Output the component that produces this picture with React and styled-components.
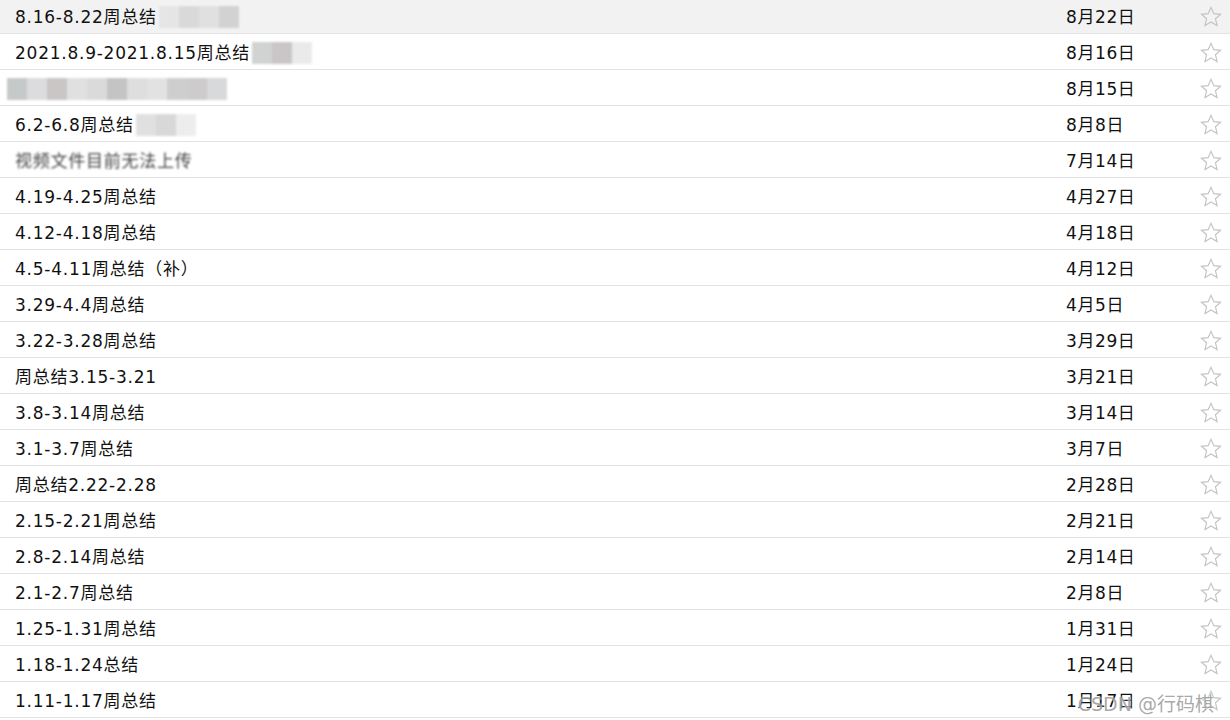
import styled, { createGlobalStyle } from "styled-components";

const GlobalStyle = createGlobalStyle`
  html, body {
    margin: 0;
    padding: 0;
    background: #fff;
    overflow: hidden;
  }
`;

const rows = [
  { title: "8.16-8.22周总结", date: "8月22日", blur: "tail", active: true },
  { title: "2021.8.9-2021.8.15周总结", date: "8月16日", blur: "tail2" },
  { title: "", date: "8月15日", blur: "full" },
  { title: "6.2-6.8周总结", date: "8月8日", blur: "tail3" },
  { title: "视频文件目前无法上传", date: "7月14日", blur: "smear" },
  { title: "4.19-4.25周总结", date: "4月27日" },
  { title: "4.12-4.18周总结", date: "4月18日" },
  { title: "4.5-4.11周总结（补）", date: "4月12日" },
  { title: "3.29-4.4周总结", date: "4月5日" },
  { title: "3.22-3.28周总结", date: "3月29日" },
  { title: "周总结3.15-3.21", date: "3月21日" },
  { title: "3.8-3.14周总结", date: "3月14日" },
  { title: "3.1-3.7周总结", date: "3月7日" },
  { title: "周总结2.22-2.28", date: "2月28日" },
  { title: "2.15-2.21周总结", date: "2月21日" },
  { title: "2.8-2.14周总结", date: "2月14日" },
  { title: "2.1-2.7周总结", date: "2月8日" },
  { title: "1.25-1.31周总结", date: "1月31日" },
  { title: "1.18-1.24总结", date: "1月24日" },
  { title: "1.11-1.17周总结", date: "1月17日" },
];

const mosaics = {
  tail: ["#e3e3e3", "#d4d4d4", "#dcdcdc", "#cbcbcb"],
  tail2: ["#c6c9c9", "#bdb9ba", "#e6e6e6"],
  tail3: ["#d9d9d9", "#cfcfcf", "#e9e9e9"],
  full: ["#b9bcbc", "#d4d4d6", "#bdb8b8", "#d9d9da", "#d2d2d2", "#b6b6b6", "#d6d6d6", "#dcdcdc", "#c3c3c3", "#c1bfbf", "#cfd0d1"],
};

const Star = () => (
  <svg width="22" height="21" viewBox="0 0 24 23">
    <path
      d="M12 1.5l3.1 6.9 7.4.7-5.6 4.9 1.7 7.3L12 17.5l-6.6 3.8 1.7-7.3-5.6-4.9 7.4-.7z"
      fill="none"
      stroke="#c4c4c4"
      strokeWidth="1.3"
      strokeLinejoin="miter"
    />
  </svg>
);

export default function App() {
  return (
    <>
      <GlobalStyle />
      <StyledPage>
        <StyledList>
          {rows.map(({ title, date, blur, active }, i) => (
            <StyledRow key={i} $active={active}>
              <StyledTitle>
                {blur === "full" ? (
                  <StyledMosaic $lead>
                    {mosaics.full.map((c, j) => (
                      <StyledTile key={j} style={{ background: c }} />
                    ))}
                  </StyledMosaic>
                ) : blur === "smear" ? (
                  <StyledSmear>{title}</StyledSmear>
                ) : (
                  <>
                    <span>{title}</span>
                    {blur && (
                      <StyledMosaic>
                        {mosaics[blur].map((c, j) => (
                          <StyledTile key={j} style={{ background: c }} />
                        ))}
                      </StyledMosaic>
                    )}
                  </>
                )}
              </StyledTitle>
              <StyledDate>{date}</StyledDate>
              <StyledStar>
                <Star />
              </StyledStar>
            </StyledRow>
          ))}
        </StyledList>
        <StyledWatermark>CSDN @行码棋</StyledWatermark>
      </StyledPage>
    </>
  );
}

//

const StyledPage = styled.div`
  position: relative;
  width: 1230px;
  height: 720px;
  overflow: hidden;
  font-family: "DejaVu Sans", Verdana, "Noto Sans CJK SC", sans-serif;
  color: #111;
`;

const StyledList = styled.ul`
  list-style: none;
  margin: -2px 0 0;
  padding: 0;
`;

const StyledRow = styled.li`
  display: grid;
  grid-template-columns: 1fr 134px 30px;
  align-items: center;
  height: 35px;
  padding-left: 15px;
  border-bottom: 1px solid #e3e3e3;
  background: ${({ $active }) => ($active ? "#f2f2f2" : "#fff")};
`;

const StyledTitle = styled.div`
  display: flex;
  align-items: center;
  font-size: 17px;
  letter-spacing: 0.75px;
  white-space: nowrap;
  line-height: 20px;
  margin-top: 2px;
`;

const StyledDate = styled.div`
  font-size: 17px;
  letter-spacing: 0.6px;
  line-height: 20px;
  margin-top: 2px;
`;

const StyledStar = styled.div`
  display: flex;
  align-items: center;
  padding-top: 2px;
`;

const StyledMosaic = styled.div`
  display: flex;
  height: 22px;
  margin-left: ${({ $lead }) => ($lead ? "-8px" : "2px")};
  filter: blur(1px);
  opacity: 0.8;
`;

const StyledTile = styled.div`
  width: 20px;
  height: 22px;
`;

const StyledSmear = styled.span`
  filter: blur(1.2px);
  color: #444;
`;

const StyledWatermark = styled.div`
  position: absolute;
  right: 16px;
  bottom: 4px;
  font-family: "DejaVu Sans", "Noto Sans CJK SC", sans-serif;
  font-size: 19px;
  color: rgba(130, 130, 130, 0.7);
  text-shadow: 0 0 2px #fff;
`;
